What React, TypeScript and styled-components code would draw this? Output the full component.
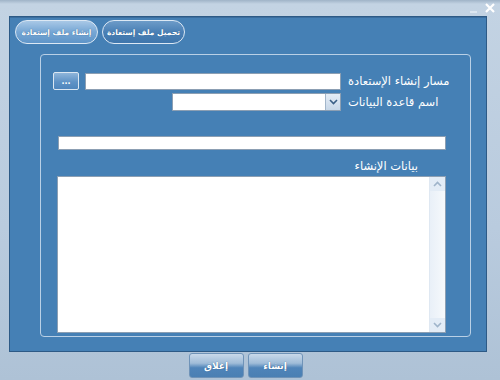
import React from 'react';
import styled, { createGlobalStyle } from 'styled-components';

const Global = createGlobalStyle`
  html, body { margin: 0; padding: 0; }
  body { width: 500px; height: 380px; overflow: hidden; font-family: "DejaVu Sans", sans-serif; }
`;

const Window = styled.div`
  width: 500px;
  height: 380px;
  display: flex;
  flex-direction: column;
  background: linear-gradient(180deg, #9fb3c7 0px, #c3d3e3 4px, #b9cbde 60%, #aec2d6 100%);
`;

const TitleBar = styled.div`
  height: 16px;
  display: flex;
  justify-content: flex-end;
  align-items: center;
  gap: 8px;
  padding-right: 5px;
`;

const Panel = styled.div`
  margin-left: 9px;
  width: 476px;
  height: 334px;
  background: #4580b5;
  border: 1px solid #2d5a86;
  box-shadow: inset 0 1px 0 #3a6d9e;
  display: flex;
  flex-direction: column;
`;

const Tabs = styled.div`
  display: flex;
  gap: 4px;
  padding: 3px 0 0 5px;
`;

const Tab = styled.div<{ $active?: boolean }>`
  width: 81px;
  height: 22px;
  border-radius: 12px;
  border: 1px solid #dce8f4;
  background: ${(p) =>
    p.$active
      ? 'linear-gradient(180deg, #a8c8e6 0%, #76a6d4 50%, #5f95c8 100%)'
      : 'linear-gradient(180deg, #6d9bc8 0%, #4a80b5 50%, #3f76ac 100%)'};
  color: #ffffff;
  font-size: 7.5px;
  font-weight: bold;
  display: flex;
  align-items: center;
  justify-content: center;
  direction: rtl;
  text-shadow: 0 0 1px #2d5a86;
`;

const GroupBox = styled.div`
  margin: 10px 0 0 30px;
  width: 417px;
  height: 281px;
  border: 1px solid #b9d0e6;
  border-radius: 4px;
  display: flex;
  flex-direction: column;
  padding-left: 12px;
  box-sizing: content-box;
`;

const Row = styled.div<{ $top: number }>`
  display: flex;
  align-items: center;
  margin-top: ${(p) => p.$top}px;
`;

const FieldArea = styled.div`
  width: 288px;
  display: flex;
  justify-content: flex-end;
  align-items: center;
  gap: 6px;
`;

const Label = styled.div`
  margin-left: 7px;
  color: #ffffff;
  font-size: 11.5px;
  direction: rtl;
  white-space: nowrap;
`;

const BrowseButton = styled.div`
  width: 24px;
  height: 16px;
  border: 1px solid #dbe7f2;
  border-radius: 2px;
  background: linear-gradient(180deg, #8fb5da 0%, #5f93c6 55%, #4f86bd 100%);
  color: #ffffff;
  font-size: 8px;
  font-weight: bold;
  display: flex;
  align-items: center;
  justify-content: center;
  margin-right: auto;
`;

const TextInput = styled.div<{ $w: number; $h: number }>`
  width: ${(p) => p.$w}px;
  height: ${(p) => p.$h}px;
  background: #ffffff;
  border: 1px solid #8c9fb3;
  box-sizing: border-box;
  display: flex;
  justify-content: flex-end;
`;

const DropButton = styled.div`
  width: 14px;
  height: 100%;
  background: linear-gradient(180deg, #e6eef7 0%, #c7d7e8 100%);
  border-left: 1px solid #a3b6ca;
  display: flex;
  align-items: center;
  justify-content: center;
`;

const Progress = styled.div`
  margin: 25px 0 0 5px;
  width: 388px;
  height: 14px;
  background: #ffffff;
  border: 1px solid #8c9fb3;
  box-sizing: border-box;
`;

const SectionLabel = styled.div`
  margin: 9px 0 0 4px;
  width: 361px;
  text-align: right;
  color: #ffffff;
  font-size: 11.5px;
  direction: rtl;
`;

const TextArea = styled.div`
  margin: 3px 0 0 4px;
  width: 389px;
  height: 157px;
  background: #ffffff;
  border: 1px solid #8c9fb3;
  box-sizing: border-box;
  display: flex;
  justify-content: flex-end;
`;

const ScrollBar = styled.div`
  width: 15px;
  height: 100%;
  background: linear-gradient(90deg, #e9f0f8 0%, #f6f9fc 100%);
  border-left: 1px solid #dfe8f2;
  display: flex;
  flex-direction: column;
  justify-content: space-between;
`;

const ScrollArrow = styled.div`
  height: 14px;
  display: flex;
  align-items: center;
  justify-content: center;
  background: #e3ecf6;
`;

const Footer = styled.div`
  display: flex;
  justify-content: center;
  gap: 4px;
  margin-top: 1px;
  padding-right: 9px;
`;

const FooterButton = styled.div`
  width: 55px;
  height: 25px;
  border: 1px solid #6f93b8;
  border-radius: 3px;
  box-sizing: border-box;
  background: linear-gradient(180deg, #c9d9ea 0%, #9fbcd8 40%, #4f84b9 60%, #4a7fb3 100%);
  color: #ffffff;
  font-size: 9px;
  font-weight: bold;
  display: flex;
  align-items: center;
  justify-content: center;
  direction: rtl;
  text-shadow: 0 0 1px #2d5a86;
`;

const Chevron = ({ up, color }: { up?: boolean; color: string }) => (
  <svg width="9" height="6" viewBox="0 0 9 6">
    <path
      d={up ? 'M1 5 L4.5 1.5 L8 5' : 'M1 1 L4.5 4.5 L8 1'}
      fill="none"
      stroke={color}
      strokeWidth="1.6"
    />
  </svg>
);

const WindowControls = () => (
  <>
    <svg width="7" height="10" viewBox="0 0 7 10">
      <path d="M0 9 H7" stroke="#e4ecf4" strokeWidth="1.5" />
    </svg>
    <svg width="10" height="10" viewBox="0 0 10 10">
      <path d="M1 1 L9 9 M9 1 L1 9" stroke="#ffffff" strokeWidth="2.2" />
    </svg>
  </>
);

export default function App() {
  return (
    <>
      <Global />
      <Window>
        <TitleBar>
          <WindowControls />
        </TitleBar>
        <Panel>
          <Tabs>
            <Tab $active>إنشاء ملف إستعادة</Tab>
            <Tab>تحميل ملف إستعادة</Tab>
          </Tabs>
          <GroupBox>
            <Row $top={17}>
              <FieldArea>
                <BrowseButton>...</BrowseButton>
                <TextInput $w={256} $h={17} />
              </FieldArea>
              <Label>مسار إنشاء الإستعادة</Label>
            </Row>
            <Row $top={3}>
              <FieldArea>
                <TextInput $w={169} $h={18}>
                  <DropButton>
                    <Chevron color="#3a5f86" />
                  </DropButton>
                </TextInput>
              </FieldArea>
              <Label>اسم قاعدة البيانات</Label>
            </Row>
            <Progress />
            <SectionLabel>بيانات الإنشاء</SectionLabel>
            <TextArea>
              <ScrollBar>
                <ScrollArrow>
                  <Chevron up color="#9fb4ca" />
                </ScrollArrow>
                <ScrollArrow>
                  <Chevron color="#9fb4ca" />
                </ScrollArrow>
              </ScrollBar>
            </TextArea>
          </GroupBox>
        </Panel>
        <Footer>
          <FooterButton>إغلاق</FooterButton>
          <FooterButton>إنشاء</FooterButton>
        </Footer>
      </Window>
    </>
  );
}
